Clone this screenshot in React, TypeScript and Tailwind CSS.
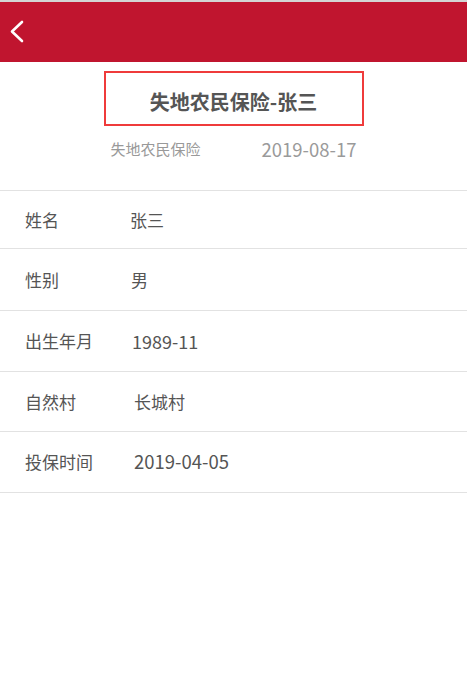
const font = { fontFamily: '"Noto Sans CJK SC", "Noto Sans", sans-serif' };

type Row = { label: string; value: string; offset: string; height: string; size: string };

const rows: Row[] = [
  { label: "姓名", value: "张三", offset: "pl-[0px]", height: "h-[58px]", size: "text-[17px]" },
  { label: "性别", value: "男", offset: "pl-[1px]", height: "h-[62px]", size: "text-[17px]" },
  { label: "出生年月", value: "1989-11", offset: "pl-[2px]", height: "h-[61px]", size: "text-[18px]" },
  { label: "自然村", value: "长城村", offset: "pl-[4px]", height: "h-[60px]", size: "text-[17px]" },
  { label: "投保时间", value: "2019-04-05", offset: "pl-[4px]", height: "h-[61px]", size: "text-[18.5px]" },
];

export default function App() {
  return (
    <div className="w-[467px] h-[690px] bg-white" style={font}>
      <div className="h-[2px] bg-[#d4d4d4]" />
      <header className="h-[60px] bg-[#c0152f] flex items-center pl-[9px]">
        <svg width="16" height="24" viewBox="0 0 16 24" fill="none">
          <path d="M13 2 L3 11.5 L13 21" stroke="white" strokeWidth="2.6" strokeLinecap="round" strokeLinejoin="round" />
        </svg>
      </header>

      <div className="flex justify-center pt-[9px]">
        <div className="w-[260px] h-[55px] border-2 border-[#ef3b3b] flex items-center justify-center pt-[6px]">
          <h1 className="text-[20px] font-bold text-[#555555] leading-none">失地农民保险-张三</h1>
        </div>
      </div>

      <div className="flex justify-center items-center gap-[61px] h-[47px]">
        <span className="text-[15px] text-[#999999]">失地农民保险</span>
        <span className="text-[18.5px] text-[#9a9a9a]">2019-08-17</span>
      </div>

      <div className="mt-[17px] border-t border-[#e2e2e2]">
        {rows.map((r) => (
          <div key={r.label} className={`flex items-center pl-[25px] border-b border-[#e2e2e2] ${r.height}`}>
            <span className="w-[105px] shrink-0 whitespace-nowrap text-[17px] text-[#555555]">{r.label}</span>
            <span className={`whitespace-nowrap text-[#555555] ${r.size} ${r.offset}`}>{r.value}</span>
          </div>
        ))}
      </div>
    </div>
  );
}
